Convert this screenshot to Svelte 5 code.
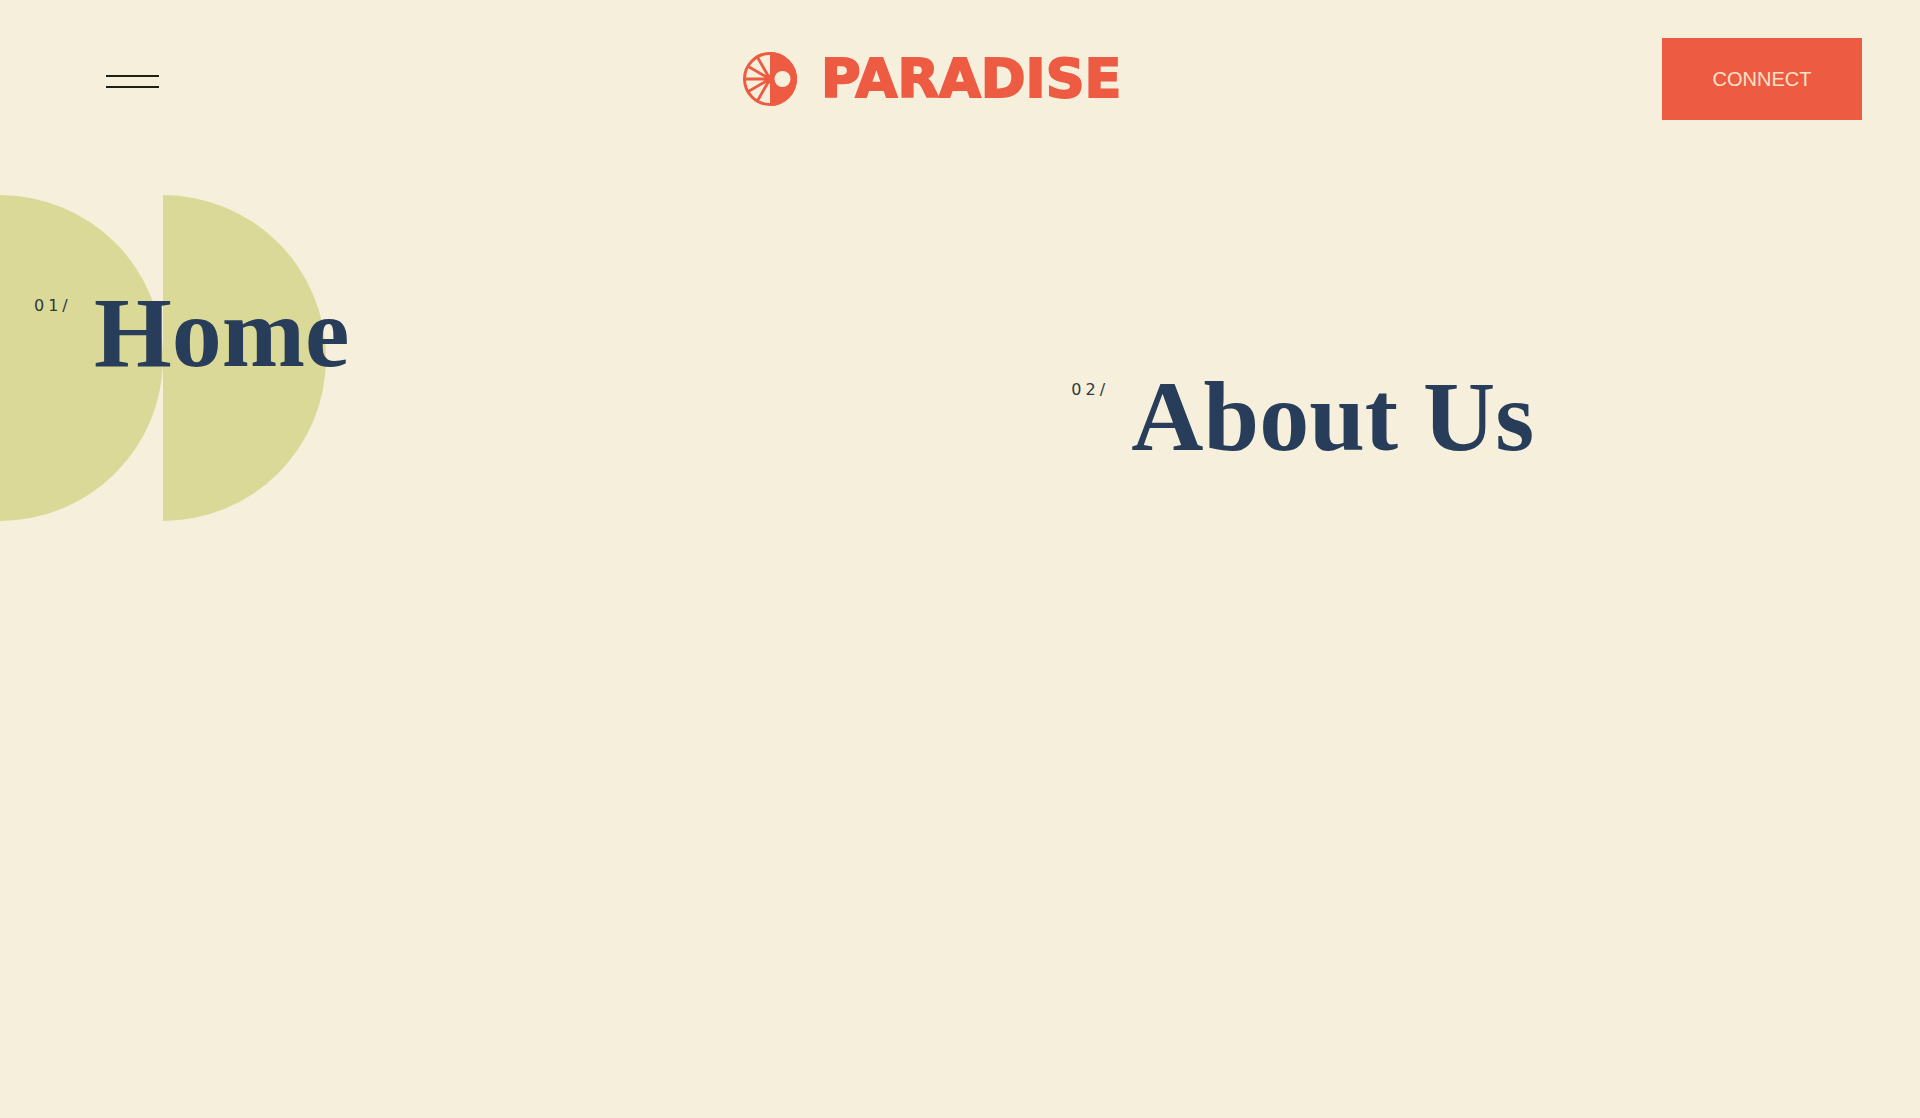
<script lang="ts">
  const links = [
    { num: '01/', label: 'Home', href: '#home' },
    { num: '02/', label: 'About Us', href: '#about' }
  ];

  let active = $state(0);
</script>

<header>
  <button class="menu" aria-label="Close menu">
    <span></span>
    <span></span>
  </button>

  <a class="brand" href="#home">
    <svg viewBox="0 0 54 54" aria-hidden="true">
      <circle cx="27" cy="27" r="25.5" fill="none" stroke="currentColor" stroke-width="3" />
      <path d="M27 0a27 27 0 0 1 0 54z" fill="currentColor" />
      <path
        d="M27 27H2M27 27L5.3 14.5M27 27L14.5 5.3M27 27L5.3 39.5M27 27L14.5 48.7"
        stroke="currentColor"
        stroke-width="2.8"
      />
      <path d="M27 22.5a4.5 4.5 0 0 0 0 9z" fill="currentColor" />
      <circle class="hole" cx="39.5" cy="27" r="8" />
    </svg>
    <span class="wordmark">PARADISE</span>
  </a>

  <button class="connect">CONNECT</button>
</header>

<nav>
  {#each links as link, i}
    <a
      class="item"
      class:active={active === i}
      href={link.href}
      onmouseenter={() => (active = i)}
    >
      <span class="num">{link.num}</span>
      <span class="label">{link.label}</span>
      {#if active === i}
        <svg class="shape" viewBox="0 0 326 326" aria-hidden="true">
          <path d="M0 0a163 163 0 0 1 0 326zM163 0a163 163 0 0 1 0 326z" />
        </svg>
      {/if}
    </a>
  {/each}
</nav>

<style>
  :global(body) {
    margin: 0;
    background: #f6efdc;
  }

  header {
    display: grid;
    grid-template-columns: 1fr auto 1fr;
    align-items: center;
    padding: 38px 58px 0 48px;
  }

  button {
    border: 0;
    border-radius: 0;
    cursor: pointer;
  }

  .menu {
    display: flex;
    flex-direction: column;
    gap: 9px;
    width: 53px;
    margin-left: 58px;
    padding: 5px 0 0;
    background: none;
  }
  .menu span {
    width: 100%;
    height: 2px;
    background: #1d2115;
  }

  .brand {
    display: flex;
    align-items: center;
    gap: 24px;
    width: 424px;
    color: #ed5b43;
    text-decoration: none;
  }
  .brand svg {
    flex: none;
    width: 54px;
    height: 54px;
  }
  .hole {
    fill: #f6efdc;
  }
  .wordmark {
    font: bold 54px/54px "DejaVu Sans", sans-serif;
    -webkit-text-stroke: 2px currentColor;
  }

  .connect {
    justify-self: end;
    width: 200px;
    height: 82px;
    padding: 0;
    background: #ed5b43;
    color: #fbe3c6;
    font: 20px "Liberation Sans", Arial, sans-serif;
  }

  nav {
    display: grid;
    grid-template-columns: 55fr 45fr;
    align-items: start;
    min-height: 60vh;
    padding: 158px 0 0 34px;
  }

  .item {
    position: relative;
    display: flex;
    align-items: flex-start;
    gap: 20px;
    color: #283d59;
    text-decoration: none;
  }
  .item:nth-child(even) {
    margin-top: 84px;
  }
  .num {
    min-width: 40px;
    padding-top: 16px;
    color: #2c3a3c;
    font: 16px/24px "DejaVu Sans", sans-serif;
    letter-spacing: 4px;
  }
  .label {
    font: bold 100px/110px "Liberation Serif", "Times New Roman", serif;
  }

  /* half discs sit behind the highlighted link and bleed off the left edge */
  .shape {
    position: absolute;
    z-index: -1;
    top: -83px;
    left: -34px;
    width: 326px;
    height: 326px;
    fill: #dbd997;
  }
</style>
